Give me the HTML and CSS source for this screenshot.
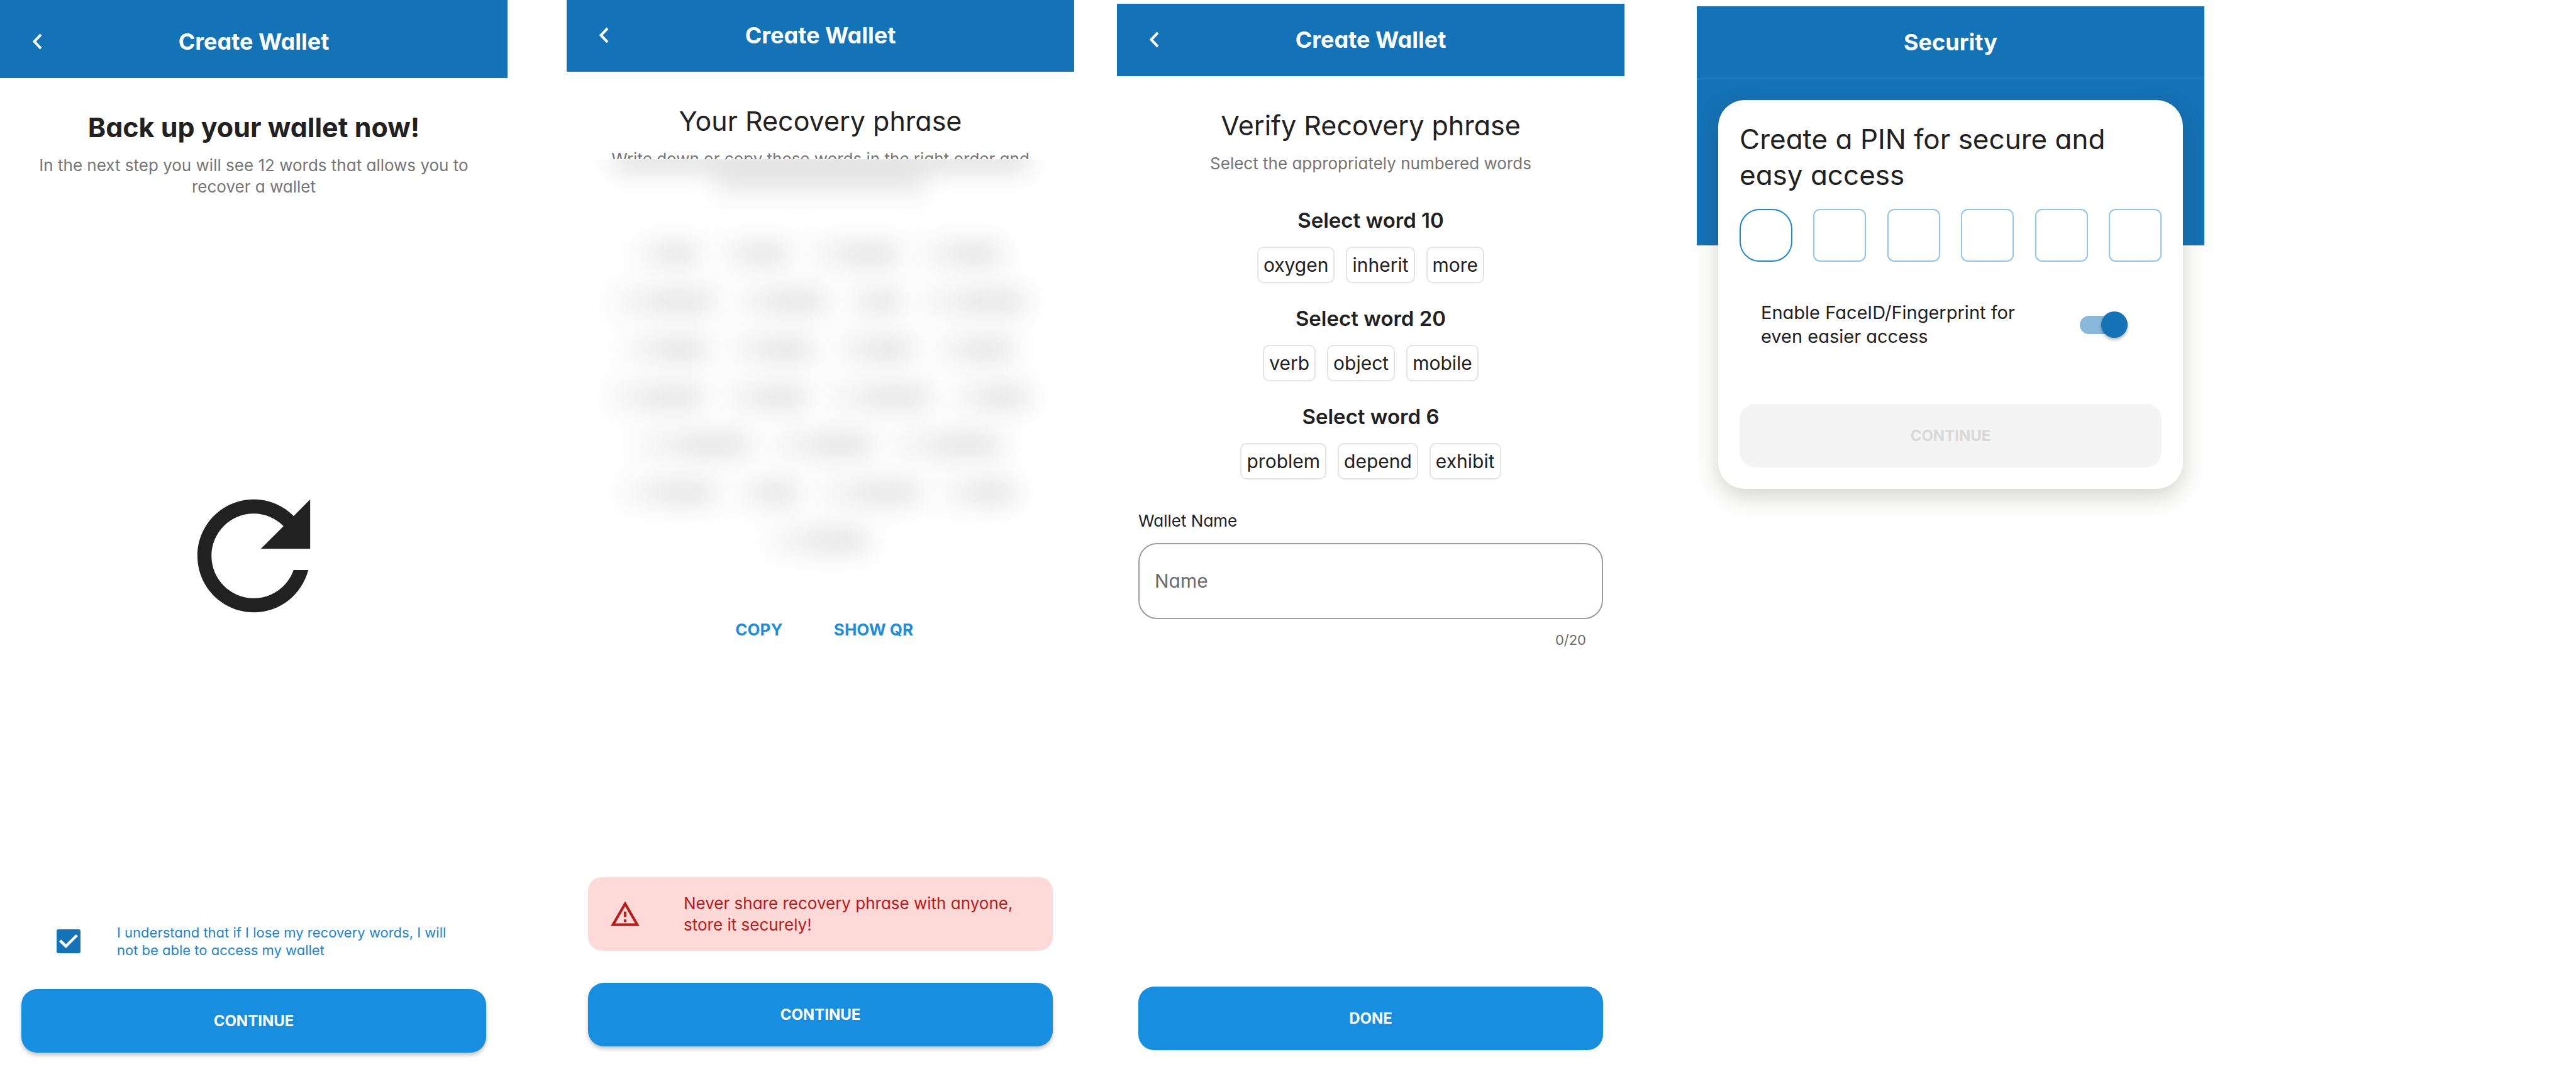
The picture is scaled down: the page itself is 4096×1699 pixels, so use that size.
FILE: index.html
```html
<!DOCTYPE html>
<html lang="en">
<head>
<meta charset="utf-8">
<title>Create Wallet</title>
<link rel="stylesheet" href="styles.css">
</head>
<body>
<div class="board">

  <section class="screen screen-backup">
    <header class="bar">
      <button class="back" type="button" aria-label="Back"><svg viewBox="0 0 16 26"><path d="M14 2 3.500 13 14 24"/></svg></button>
      <h2 class="bar-title">Create Wallet</h2>
    </header>
    <main class="body">
      <h1 class="heading strong">Back up your wallet now!</h1>
      <p class="sub">In the next step you will see 12 words that allows you to<br>recover a wallet</p>
      <div class="hero">
        <svg class="refresh" viewBox="0 0 24 24" aria-hidden="true"><path d="M17.65 6.350C16.200 4.900 14.210 4 12 4c-4.420 0-7.990 3.580-7.990 8s3.570 8 7.990 8c3.730 0 6.840-2.550 7.730-6h-2.080c-.820 2.330-3.040 4-5.650 4-3.310 0-6-2.690-6-6s2.690-6 6-6c1.660 0 3.140.690 4.220 1.780L13 11h7V4l-2.350 2.350z"/></svg>
      </div>
      <div class="consent">
        <input class="check" type="checkbox" id="agree" checked>
        <label for="agree">I understand that if I lose my recovery words, I will<br>not be able to access my wallet</label>
      </div>
      <button class="primary" type="button">CONTINUE</button>
    </main>
  </section>

  <section class="screen screen-phrase">
    <header class="bar">
      <button class="back" type="button" aria-label="Back"><svg viewBox="0 0 16 26"><path d="M14 2 3.500 13 14 24"/></svg></button>
      <h2 class="bar-title">Create Wallet</h2>
    </header>
    <main class="body">
      <h1 class="heading">Your Recovery phrase</h1>
      <p class="sub cut">Write down or copy these words in the right order and</p>
      <div class="veil" aria-hidden="true">
        <div class="hidden-words">
          <span class="mask line-one"></span>
          <span class="mask line-two"></span>
          <div class="row"><span class="word"><i class="mask" style="width:84px"></i></span><span class="word"><i class="mask" style="width:98px"></i></span><span class="word"><i class="mask" style="width:130px"></i></span><span class="word"><i class="mask" style="width:117px"></i></span></div>
          <div class="row"><span class="word"><i class="mask" style="width:149px"></i></span><span class="word"><i class="mask" style="width:133px"></i></span><span class="word"><i class="mask" style="width:73px"></i></span><span class="word"><i class="mask" style="width:152px"></i></span></div>
          <div class="row"><span class="word"><i class="mask" style="width:120px"></i></span><span class="word"><i class="mask" style="width:123px"></i></span><span class="word"><i class="mask" style="width:112px"></i></span><span class="word"><i class="mask" style="width:114px"></i></span></div>
          <div class="row"><span class="word"><i class="mask" style="width:138px"></i></span><span class="word"><i class="mask" style="width:120px"></i></span><span class="word"><i class="mask" style="width:149px"></i></span><span class="word"><i class="mask" style="width:112px"></i></span></div>
          <div class="row"><span class="word"><i class="mask" style="width:168px"></i></span><span class="word"><i class="mask" style="width:149px"></i></span><span class="word"><i class="mask" style="width:158px"></i></span></div>
          <div class="row"><span class="word"><i class="mask" style="width:134px"></i></span><span class="word"><i class="mask" style="width:87px"></i></span><span class="word"><i class="mask" style="width:147px"></i></span><span class="word"><i class="mask" style="width:106px"></i></span></div>
          <div class="row"><span class="word"><i class="mask" style="width:144px"></i></span></div>
        </div>
      </div>
      <div class="links">
        <button class="link" type="button">COPY</button>
        <button class="link" type="button">SHOW QR</button>
      </div>
      <div class="alert" role="alert">
        <svg class="warn" viewBox="0 0 24 24" aria-hidden="true"><path d="M12 5.990L19.530 19H4.470L12 5.990M12 2L1 21h22L12 2zm1 14h-2v2h2v-2zm0-6h-2v4h2v-4z"/></svg>
        <p>Never share recovery phrase with anyone,<br>store it securely!</p>
      </div>
      <button class="primary" type="button">CONTINUE</button>
    </main>
  </section>

  <section class="screen screen-verify">
    <header class="bar">
      <button class="back" type="button" aria-label="Back"><svg viewBox="0 0 16 26"><path d="M14 2 3.500 13 14 24"/></svg></button>
      <h2 class="bar-title">Create Wallet</h2>
    </header>
    <main class="body">
      <h1 class="heading">Verify Recovery phrase</h1>
      <p class="sub">Select the appropriately numbered words</p>
      <div class="quiz">
        <div class="question">
          <h3>Select word 10</h3>
          <div class="chips"><button class="chip" type="button">oxygen</button><button class="chip" type="button">inherit</button><button class="chip" type="button">more</button></div>
        </div>
        <div class="question">
          <h3>Select word 20</h3>
          <div class="chips"><button class="chip" type="button">verb</button><button class="chip" type="button">object</button><button class="chip" type="button">mobile</button></div>
        </div>
        <div class="question">
          <h3>Select word 6</h3>
          <div class="chips"><button class="chip" type="button">problem</button><button class="chip" type="button">depend</button><button class="chip" type="button">exhibit</button></div>
        </div>
      </div>
      <div class="field">
        <label for="wallet-name">Wallet Name</label>
        <input id="wallet-name" type="text" placeholder="Name" maxlength="20">
        <span class="count">0/20</span>
      </div>
      <button class="primary flat" type="button">DONE</button>
    </main>
  </section>

  <section class="screen screen-pin">
    <header class="bar">
      <h2 class="bar-title">Security</h2>
    </header>
    <main class="backdrop">
      <form class="card">
        <h1 class="card-title">Create a PIN for secure and<br>easy access</h1>
        <div class="pins">
          <input class="pin current" type="password" maxlength="1" aria-label="PIN digit 1">
          <input class="pin" type="password" maxlength="1" aria-label="PIN digit 2">
          <input class="pin" type="password" maxlength="1" aria-label="PIN digit 3">
          <input class="pin" type="password" maxlength="1" aria-label="PIN digit 4">
          <input class="pin" type="password" maxlength="1" aria-label="PIN digit 5">
          <input class="pin" type="password" maxlength="1" aria-label="PIN digit 6">
        </div>
        <div class="biometric">
          <label for="bio">Enable FaceID/Fingerprint for<br>even easier access</label>
          <input class="switch" type="checkbox" role="switch" id="bio" checked>
        </div>
        <button class="primary" type="button" disabled>CONTINUE</button>
      </form>
    </main>
  </section>

</div>
</body>
</html>
```

FILE: styles.css
```css
:root {
  --navy: #1472b6;
  --blue: #188ee0;
  --ink: #212121;
}

* { box-sizing: border-box; }

body {
  margin: 0;
  background: #fff;
  color: var(--ink);
  font-family: Inter, "Open Sans", sans-serif;
  font-feature-settings: "cv11";
}

h1, h2, h3, p { margin: 0; }

button, input {
  font: inherit;
  font-feature-settings: inherit;
  margin: 0;
}

.board {
  display: grid;
  grid-template-columns: 807fr 94fr 807fr 68fr 807fr 115fr 807fr 591fr;
  min-height: 100vh;
}

.screen {
  display: flex;
  flex-direction: column;
  min-width: 0;
}
.screen-backup { grid-column: 1; padding-bottom: 26px; }
.screen-phrase { grid-column: 3; padding-bottom: 36px; }
.screen-verify { grid-column: 5; padding: 6px 0 30px; }
.screen-pin { grid-column: 7; padding-top: 10px; }

/* top bar */
.bar {
  display: grid;
  grid-template-columns: 1fr auto 1fr;
  align-items: center;
  padding: 35px 51px 36px;
  background: var(--navy);
}
.screen-backup .bar { padding-top: 44px; }
.screen-phrase .bar { padding-top: 34px; }
.screen-pin .bar { border-bottom: 1px solid #3f8fcb; }

.bar-title {
  grid-column: 2;
  color: #fff;
  font-size: 36px;
  line-height: 44px;
  font-weight: 700;
}
.back {
  justify-self: start;
  display: flex;
  padding: 0;
  border: 0;
  background: none;
}
.back svg {
  width: 16px;
  height: 26px;
  fill: none;
  stroke: #fff;
  stroke-width: 4;
}

/* shared page parts */
.body {
  flex: 1;
  display: flex;
  flex-direction: column;
  padding: 52px 34px 0;
}
.heading {
  font-size: 43px;
  line-height: 52px;
  font-weight: 400;
  text-align: center;
}
.heading.strong { font-weight: 700; }
.sub {
  padding-top: 18px;
  color: #757575;
  font-size: 26px;
  line-height: 34px;
  text-align: center;
}
.primary {
  height: 101px;
  border: 0;
  border-radius: 25px;
  background: var(--blue);
  color: #fff;
  font-size: 24px;
  font-weight: 700;
  box-shadow: 0 4px 6px rgba(0, 0, 0, .24);
}
.primary.flat { margin-top: auto; box-shadow: none; }
.primary:disabled {
  background: #f4f4f4;
  color: #d8d8d8;
  box-shadow: none;
}

/* backup */
.hero {
  flex: 1;
  display: flex;
  align-items: center;
  justify-content: center;
  padding-bottom: 16px;
}
.refresh { width: 269px; height: 269px; fill: var(--ink); }

.consent {
  display: flex;
  align-items: center;
  gap: 58px;
  margin-bottom: 48px;
  padding: 0 56px;
  color: #1e84cc;
  font-size: 22px;
  line-height: 28px;
}
.check {
  appearance: none;
  flex: none;
  width: 38px;
  height: 38px;
  border-radius: 3px;
  background: var(--navy);
  display: grid;
  place-items: center;
}
.check::before {
  content: "";
  width: 30px;
  height: 22px;
  background: #fff;
  clip-path: polygon(0 52%, 11% 38%, 36% 72%, 89% 0, 100% 13%, 36% 100%);
}

/* recovery phrase: everything below the cut line is blurred */
.sub.cut {
  height: 35px;
  overflow: hidden;
}
.veil {
  margin: 0 -34px;
  padding-bottom: 60px;
  overflow: hidden;
}
.hidden-words {
  display: flex;
  flex-direction: column;
  gap: 18px;
  filter: blur(19px);
}
.mask {
  display: block;
  height: 26px;
  background: linear-gradient(90deg, rgba(0, 0, 0, .07) 25%, rgba(0, 0, 0, .14) 45%);
}
.line-one,
.line-two {
  flex: none;
  align-self: center;
}
.line-one {
  width: 660px;
  margin-top: -9px;
  background: rgba(0, 0, 0, .16);
}
.line-two {
  width: 332px;
  margin: -10px 0 52px;
  background: rgba(0, 0, 0, .11);
}
.row {
  display: flex;
  justify-content: center;
  gap: 18px;
}
.word {
  display: flex;
  align-items: center;
  height: 58px;
  padding: 0 12px;
  border: 2px solid #e4e4e4;
  border-radius: 10px;
}
.links {
  display: flex;
  justify-content: center;
  gap: 77px;
  margin-top: 36px;
  padding-left: 8px;
}
.link {
  min-width: 84px;
  padding: 0;
  border: 0;
  background: none;
  color: #1e8edc;
  font-size: 26px;
  line-height: 34px;
  font-weight: 700;
}
.alert {
  display: flex;
  align-items: center;
  gap: 68px;
  height: 117px;
  margin: auto 0 51px;
  padding: 0 34px;
  border-radius: 22px;
  background: #fdd9d7;
  color: #b71c1c;
  font-size: 26px;
  line-height: 34px;
}
.warn { flex: none; width: 50px; height: 50px; fill: #b71c1c; }

/* verify */
.quiz {
  display: flex;
  flex-direction: column;
  gap: 34px;
  margin-top: 51px;
}
.question h3 {
  margin-bottom: 20px;
  font-size: 33px;
  line-height: 44px;
  font-weight: 600;
  text-align: center;
}
.chips {
  display: flex;
  justify-content: center;
  gap: 18px;
}
.chip {
  height: 58px;
  padding: 0 8px;
  border: 2px solid #e4e4e4;
  border-radius: 10px;
  background: #fff;
  color: var(--ink);
  font-size: 30px;
}
.field {
  display: flex;
  flex-direction: column;
  margin-top: 49px;
}
.field label { font-size: 26px; line-height: 34px; }
.field input {
  height: 121px;
  margin: 18px 0 19px;
  padding: 0 24px 2px;
  border: 2px solid #9c9c9c;
  border-radius: 30px;
  background: #fff;
  font-size: 30px;
}
.field input::placeholder { color: #6b6b6b; opacity: 1; }
.count {
  align-self: flex-end;
  padding-right: 27px;
  color: #6b6b6b;
  font-size: 22px;
  line-height: 28px;
}

/* PIN */
.backdrop {
  padding: 33px 34px;
  background: linear-gradient(var(--navy) 264px, transparent 264px);
}
.card {
  display: flex;
  flex-direction: column;
  padding: 34px;
  border-radius: 42px;
  background: #fff;
  box-shadow: 0 12px 36px rgba(50, 52, 24, .22);
}
.card-title {
  font-size: 44px;
  line-height: 57px;
  font-weight: 400;
}
.pins {
  display: flex;
  justify-content: space-between;
  margin-top: 25px;
}
.pin {
  width: 84px;
  height: 84px;
  padding: 0;
  border: 2px solid #92c5e9;
  border-radius: 11px;
  background: #fff;
  text-align: center;
}
.pin.current { border-color: #1e88cf; border-radius: 32px; }
.biometric {
  display: flex;
  align-items: center;
  justify-content: space-between;
  margin: 62px 0 88px;
  padding: 0 54px 0 34px;
  font-size: 29px;
  line-height: 38px;
}
.switch {
  appearance: none;
  flex: none;
  display: flex;
  align-items: center;
  justify-content: flex-end;
  width: 76px;
  height: 29px;
  border-radius: 15px;
  background: #8ab8da;
}
.switch::before {
  content: "";
  width: 42px;
  height: 42px;
  border-radius: 50%;
  background: var(--navy);
  box-shadow: 0 3px 5px rgba(0, 0, 0, .3);
}
```
